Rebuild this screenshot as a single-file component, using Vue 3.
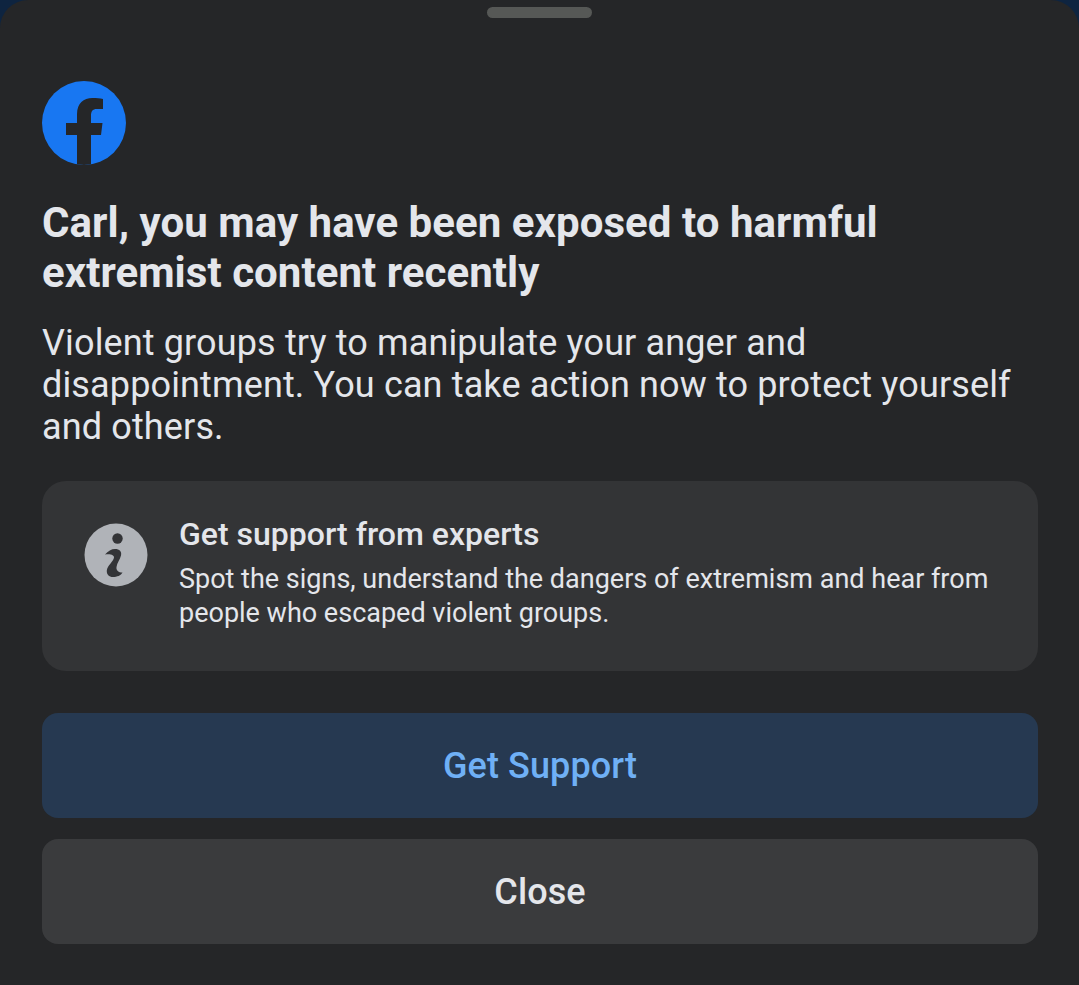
<script setup>
const title = 'Carl, you may have been exposed to harmful extremist content recently'
</script>

<template>
  <div class="screen">
    <section class="sheet">
      <div class="handle"></div>
      <svg class="logo" viewBox="0 0 84 84" width="84" height="84" aria-hidden="true">
        <defs>
          <clipPath id="fbc"><circle cx="42" cy="42" r="42" /></clipPath>
        </defs>
        <circle cx="42" cy="42" r="42" fill="#1877f2" />
        <path clip-path="url(#fbc)" fill="#252628" d="M35 84V54H24V42H35V33C35 22.500 41.500 17 50.500 17C54.500 17 58 17.400 61 18V28H55C50.300 28 49 30.500 49 35V42H60.500L59 54H49V84Z" />
      </svg>
      <h1 class="title">{{ title }}</h1>
      <p class="body">Violent groups try to manipulate your anger and disappointment. You can take action now to protect yourself and others.</p>
      <div class="card">
        <svg class="info" viewBox="0 0 64 64" width="64" height="64" aria-hidden="true">
          <circle cx="32" cy="32" r="31.500" fill="#b0b3b8" />
          <circle cx="33.500" cy="15.500" r="5.200" fill="#333437" />
          <path fill="#333437" d="M21 31.500C24 28 27.500 26 31 26C35.500 26 38 28.500 37 32.500C36 36.500 33 40 32.500 44C32 47.500 34.500 49.500 38.500 49.500C37 52.500 33 54 29 54C25 54 22.500 51.500 22.800 47.500C23.200 42.500 29.500 38.500 30 34.500C30.300 32 26.500 30.500 21 31.500Z" />
        </svg>
        <div class="card-text">
          <h2 class="card-title">Get support from experts</h2>
          <p class="card-body">Spot the signs, understand the dangers of extremism and hear from people who escaped violent groups.</p>
        </div>
      </div>
      <button class="btn primary">Get Support</button>
      <button class="btn secondary">Close</button>
    </section>
  </div>
</template>

<style>
html, body { margin: 0; background: #0e2440; }
</style>

<style scoped>
.screen {
  width: 1079px;
  height: 985px;
  overflow: hidden;
  background: #0e2440;
  font-family: Roboto, "Liberation Sans", sans-serif;
}
.sheet {
  box-sizing: border-box;
  height: 985px;
  padding: 7px 41px 0 42px;
  background: #252628;
  border-radius: 28px 28px 0 0;
  display: flex;
  flex-direction: column;
}
.handle {
  width: 105px;
  height: 11px;
  border-radius: 6px;
  background: #565856;
  align-self: center;
  margin-left: -1px;
}
.logo {
  display: block;
  margin-top: 63px;
}
.title {
  margin: 33px 0 0;
  font-size: 42px;
  line-height: 50px;
  font-weight: 700;
  letter-spacing: 0.05px;
  color: #e4e6eb;
}
.body {
  margin: 24px 0 0;
  font-size: 36px;
  line-height: 42px;
  font-weight: 400;
  letter-spacing: 0.14px;
  color: #e4e6eb;
}
.card {
  box-sizing: border-box;
  height: 190px;
  margin-top: 33px;
  padding: 37px 42px 0;
  display: flex;
  gap: 31px;
  background: #333436;
  border-radius: 24px;
}
.info {
  flex: none;
  margin-top: 5px;
}
.card-text {
  flex: 1;
  min-width: 0;
}
.card-title {
  margin: 0;
  font-size: 32px;
  line-height: 32px;
  font-weight: 500;
  color: #e4e6eb;
}
.card-body {
  margin: 12px 0 0;
  font-size: 27px;
  line-height: 34px;
  font-weight: 400;
  color: #e4e6eb;
}
.btn {
  display: block;
  width: 100%;
  height: 105px;
  border: 0;
  border-radius: 16px;
  font-family: inherit;
  font-size: 36px;
  font-weight: 500;
  letter-spacing: 0.1px;
  padding: 0;
}
.primary {
  margin-top: 42px;
  background: #263951;
  color: #6fb0f5;
}
.secondary {
  margin-top: 21px;
  background: #3a3b3d;
  color: #e4e6eb;
}
</style>
